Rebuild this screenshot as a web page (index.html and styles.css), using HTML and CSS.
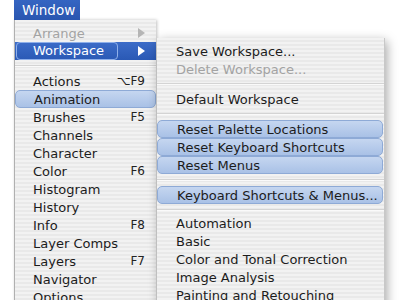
FILE: index.html
```html
<!DOCTYPE html>
<html>
<head>
<meta charset="utf-8">
<link rel="stylesheet" href="styles.css">
</head>
<body>
<div class="screen">
  <div class="menubar">
    <div class="title">Window</div>
  </div>
  <div class="menu main">
    <div class="item disabled"><span class="label">Arrange</span><span class="arrow gray"></span></div>
    <div class="item selected"><span class="label boxed">Workspace</span><span class="arrow white"></span></div>
    <div class="sep"></div>
    <div class="item"><span class="label">Actions</span><span class="key">⌥F9</span></div>
    <div class="item soft"><span class="label">Animation</span></div>
    <div class="item"><span class="label">Brushes</span><span class="key">F5</span></div>
    <div class="item"><span class="label">Channels</span></div>
    <div class="item"><span class="label">Character</span></div>
    <div class="item"><span class="label">Color</span><span class="key">F6</span></div>
    <div class="item"><span class="label">Histogram</span></div>
    <div class="item"><span class="label">History</span></div>
    <div class="item"><span class="label">Info</span><span class="key">F8</span></div>
    <div class="item"><span class="label">Layer Comps</span></div>
    <div class="item"><span class="label">Layers</span><span class="key">F7</span></div>
    <div class="item"><span class="label">Navigator</span></div>
    <div class="item"><span class="label">Options</span></div>
  </div>
  <div class="menu sub">
    <div class="item"><span class="label">Save Workspace...</span></div>
    <div class="item disabled"><span class="label">Delete Workspace...</span></div>
    <div class="sep"></div>
    <div class="item"><span class="label">Default Workspace</span></div>
    <div class="sep"></div>
    <div class="item soft"><span class="label">Reset Palette Locations</span></div>
    <div class="item soft"><span class="label">Reset Keyboard Shortcuts</span></div>
    <div class="item soft"><span class="label">Reset Menus</span></div>
    <div class="sep"></div>
    <div class="item soft"><span class="label">Keyboard Shortcuts &amp; Menus...</span></div>
    <div class="sep short"></div>
    <div class="item"><span class="label">Automation</span></div>
    <div class="item"><span class="label">Basic</span></div>
    <div class="item"><span class="label">Color and Tonal Correction</span></div>
    <div class="item"><span class="label">Image Analysis</span></div>
    <div class="item"><span class="label">Painting and Retouching</span></div>
  </div>
</div>
</body>
</html>
```
FILE: styles.css
```css
html, body {
  margin: 0;
  padding: 0;
  background: #ffffff;
}
.screen {
  position: relative;
  width: 400px;
  height: 300px;
  overflow: hidden;
  font-family: "DejaVu Sans", "Liberation Sans", sans-serif;
  font-size: 13px;
  color: #1c1c1c;
}
.menubar {
  height: 20px;
  padding-left: 14px;
  display: flex;
}
.title {
  background: linear-gradient(#3565c2, #2a56b0);
  color: #ffffff;
  padding: 0 8px;
  width: 50px;
  line-height: 20px;
  font-size: 13.5px;
}
.menu {
  background: repeating-linear-gradient(#f2f2f2 0px, #f2f2f2 2px, #e9e9e9 2px, #e9e9e9 4px);
  padding-top: 4px;
  display: flex;
  flex-direction: column;
}
.main {
  margin-left: 14px;
  width: 141px;
  height: 300px;
  border-left: 1px solid #b0b0b0;
  box-shadow: 1px 0 3px rgba(0,0,0,0.25);
}
.sub {
  position: absolute;
  left: 157px;
  top: 38px;
  width: 227px;
  height: 280px;
  border-right: 1px solid #c8c8c8;
  box-shadow: 2px 3px 10px rgba(0,0,0,0.35);
}
.item {
  height: 18px;
  flex: none;
  display: flex;
  align-items: center;
  padding: 0 10px 0 18px;
  position: relative;
  box-sizing: border-box;
}
.sub .item {
  padding-left: 19px;
}
.label {
  flex: 1;
  white-space: nowrap;
}
.key {
  font-size: 12px;
  color: #222;
  margin-right: 1px;
}
.disabled {
  color: #a3a3a3;
}
.sep {
  height: 12px;
  flex: none;
  position: relative;
}
.sep.short {
  height: 10px;
}
.sep::after {
  content: "";
  position: absolute;
  left: 0;
  right: 0;
  top: 5px;
  border-top: 1px solid #d4d4d4;
  border-bottom: 1px solid #fafafa;
}
.selected {
  background: linear-gradient(#3c6cc8, #2a59b5);
  color: #ffffff;
}
.boxed {
  flex: none;
  width: 84px;
  margin-left: -17px;
  padding-left: 16px;
  height: 16px;
  line-height: 16px;
  border: 1px solid #8fb0ea;
  border-radius: 4px;
}
.selected .label.boxed + .arrow {
  margin-left: auto;
}
.soft {
  background: linear-gradient(#c5d6f0, #a9c1e6);
  border: 1px solid #8eaad6;
  border-radius: 5px;
}
.sub .soft {
  margin-right: 1px;
}
.arrow {
  width: 0;
  height: 0;
  border-top: 5px solid transparent;
  border-bottom: 5px solid transparent;
  border-left: 7px solid #ffffff;
  margin-right: 1px;
}
.arrow.gray {
  border-left-color: #b5b5b5;
}
```
